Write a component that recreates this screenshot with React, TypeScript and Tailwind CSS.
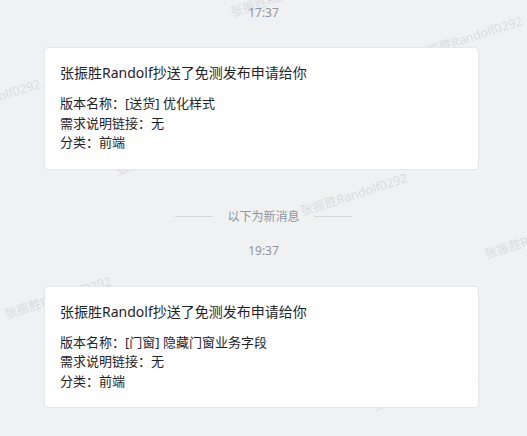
import React from "react";

// ─── Watermark layer ─────────────────────────────────────────────────────────

const marks: { x: number; y: number }[] = [
  { x: 233, y: 18 },
  { x: 418, y: 60 },
  { x: -64, y: 123 },
  { x: 118, y: 176 },
  { x: 303, y: 217 },
  { x: 487, y: 260 },
  { x: 7, y: 320 },
  { x: 375, y: 412 },
];

function Watermarks() {
  return (
    <div className="absolute inset-0 pointer-events-none select-none">
      {marks.map((m, i) => (
        <span
          key={i}
          className="absolute origin-bottom-left -rotate-[18deg] whitespace-nowrap text-[12.5px] leading-[13px] text-[#dadcdf]"
          style={{ left: m.x, top: m.y - 12 }}
        >
          张振胜Randolf0292
        </span>
      ))}
    </div>
  );
}

// ─── Message card ────────────────────────────────────────────────────────────

interface Msg {
  time: string;
  version: string;
}

function TimeStamp({ time }: { time: string }) {
  return <div className="text-center text-[12px] leading-5 text-[#8f959e]">{time}</div>;
}

function MessageCard({ version }: { version: string }) {
  return (
    <div className="relative ml-[44px] w-[435px] rounded border border-[#e4e6ea] bg-white pl-[15px] pr-4 pt-[14px] pb-[16px] text-[#1f2329]">
      <div className="text-[14px] leading-[22px]">张振胜Randolf抄送了免测发布申请给你</div>
      <div className="mt-[10px] text-[13px] leading-[19.5px]">
        <div>版本名称：{version}</div>
        <div>需求说明链接：无</div>
        <div>分类：前端</div>
      </div>
    </div>
  );
}

export default function App() {
  const msgs: Msg[] = [
    { time: "17:37", version: "[送货] 优化样式" },
    { time: "19:37", version: "[门窗] 隐藏门窗业务字段" },
  ];

  return (
    <div
      className="relative h-screen w-full overflow-hidden bg-[#f0f1f3]"
      style={{ fontFamily: '"Noto Sans", "Noto Sans CJK SC", sans-serif' }}
    >
      <Watermarks />
      <div className="relative flex flex-col pt-[3px]">
        <TimeStamp time={msgs[0].time} />
        <div className="mt-[24px]">
          <MessageCard version={msgs[0].version} />
        </div>

        {/* new-messages divider */}
        <div className="mt-[37px] flex items-center justify-center gap-[14px]">
          <div className="h-px w-[38px] bg-[#d5d7db]" />
          <span className="text-[12px] leading-5 text-[#8f959e]">以下为新消息</span>
          <div className="h-px w-[38px] bg-[#d5d7db]" />
        </div>

        <div className="mt-[14px]">
          <TimeStamp time={msgs[1].time} />
        </div>
        <div className="mt-[25px]">
          <MessageCard version={msgs[1].version} />
        </div>
      </div>
    </div>
  );
}
